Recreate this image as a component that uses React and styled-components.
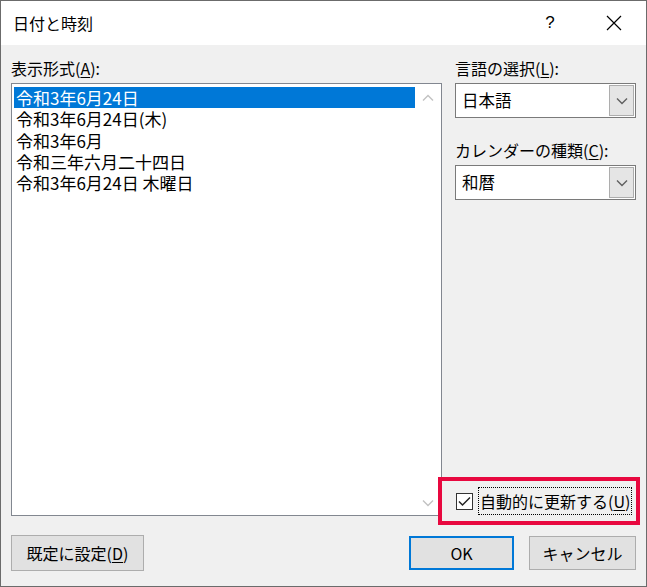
import React from "react";
import styled, { createGlobalStyle } from "styled-components";

const GlobalStyle = createGlobalStyle`
  html, body {
    margin: 0;
    padding: 0;
    background: #ffffff;
  }
  * {
    box-sizing: border-box;
  }
`;

const FONT = `"Noto Sans CJK JP", "Noto Sans", "Liberation Sans", sans-serif`;

const Window = styled.div`
  width: 647px;
  height: 587px;
  border: 1px solid #6b6b6b;
  display: flex;
  flex-direction: column;
  font-family: ${FONT};
  font-size: 16px;
  color: #000;
  background: #f0f0f0;
`;

const TitleBar = styled.div`
  height: 44px;
  background: #fff;
  display: flex;
  align-items: center;
  padding-left: 12px;
`;

const Title = styled.div`
  flex: 1;
  font-size: 16px;
`;

const TitleButton = styled.div`
  width: 64px;
  height: 44px;
  display: flex;
  align-items: center;
  justify-content: center;
  font-size: 17px;
  font-family: "Liberation Sans", sans-serif;
`;

const Body = styled.div`
  flex: 1;
  display: flex;
  flex-direction: column;
  padding: 12px 10px 15px 10px;
`;

const Main = styled.div`
  flex: 1;
  display: flex;
  gap: 13px;
`;

const LeftColumn = styled.div`
  width: 431px;
  display: flex;
  flex-direction: column;
  padding-bottom: 9px;
`;

const RightColumn = styled.div`
  flex: 1;
  display: flex;
  flex-direction: column;
`;

const Label = styled.div`
  height: 22px;
  line-height: 22px;
  margin-bottom: 4px;
  margin-top: ${(p) => p.$top || 0}px;
  white-space: nowrap;
`;

const Key = styled.span`
  text-decoration: underline;
  text-underline-offset: 2px;
`;

const ListBox = styled.div`
  flex: 1;
  display: flex;
  background: #fff;
  border: 1px solid #828790;
`;

const Items = styled.div`
  flex: 1;
  padding: 3px 0 0 2px;
`;

const Item = styled.div`
  height: 21.25px;
  line-height: 21px;
  padding-left: 2px;
  font-size: 17px;
  white-space: nowrap;
  background: ${(p) => (p.$selected ? "#0078d7" : "transparent")};
  color: ${(p) => (p.$selected ? "#fff" : "#000")};
`;

const ScrollBar = styled.div`
  width: 26px;
  display: flex;
  flex-direction: column;
  justify-content: space-between;
  align-items: center;
  padding: 10px 0 8px;
`;

const Combo = styled.div`
  height: 35px;
  display: flex;
  background: #fff;
  border: 1px solid #7a7a7a;
`;

const ComboText = styled.div`
  flex: 1;
  padding-left: 6px;
  line-height: 33px;
  font-size: 16.5px;
`;

const ComboButton = styled.div`
  width: 25px;
  margin: 1px;
  background: #e5e5e5;
  border: 1px solid #adadad;
  display: flex;
  align-items: center;
  justify-content: center;
`;

const Spacer = styled.div`
  flex: 1;
`;

const Highlight = styled.div`
  height: 48px;
  margin-left: -17px;
  margin-right: -4px;
  border: 4px solid #e8083f;
  display: flex;
  align-items: center;
  padding-left: 14px;
  gap: 5px;
`;

const CheckBox = styled.div`
  width: 17px;
  height: 17px;
  border: 1px solid #333;
  background: #fff;
  display: flex;
  align-items: center;
  justify-content: center;
`;

const FocusLabel = styled.div`
  border: 1px dotted #000;
  height: 28px;
  line-height: 26px;
  padding: 0 1px;
  white-space: nowrap;
`;

const Footer = styled.div`
  margin-top: 10px;
  display: flex;
  align-items: center;
`;

const Button = styled.div`
  width: ${(p) => p.$w}px;
  height: ${(p) => p.$h || 34}px;
  margin-left: ${(p) => p.$ml || 0}px;
  background: #e1e1e1;
  border: ${(p) => (p.$default ? "2px solid #0078d7" : "1px solid #adadad")};
  display: flex;
  align-items: center;
  justify-content: center;
  white-space: nowrap;
`;

const Chevron = ({ up, color }) => (
  <svg width="12" height="8" viewBox="0 0 12 8">
    <path
      d={up ? "M1 6.5 L6 1.5 L11 6.5" : "M1 1.5 L6 6.5 L11 1.5"}
      fill="none"
      stroke={color}
      strokeWidth="1.4"
    />
  </svg>
);

const items = [
  "令和3年6月24日",
  "令和3年6月24日(木)",
  "令和3年6月",
  "令和三年六月二十四日",
  "令和3年6月24日 木曜日",
];

export default function App() {
  return (
    <>
      <GlobalStyle />
      <Window>
        <TitleBar>
          <Title>日付と時刻</Title>
          <TitleButton>?</TitleButton>
          <TitleButton>
            <svg width="16" height="16" viewBox="0 0 16 16">
              <path d="M1 1 L15 15 M15 1 L1 15" stroke="#000" strokeWidth="1.2" />
            </svg>
          </TitleButton>
        </TitleBar>
        <Body>
          <Main>
            <LeftColumn>
              <Label>
                表示形式(<Key>A</Key>):
              </Label>
              <ListBox>
                <Items>
                  {items.map((t, i) => (
                    <Item key={t} $selected={i === 0}>
                      {t}
                    </Item>
                  ))}
                </Items>
                <ScrollBar>
                  <Chevron up color="#c2c2c2" />
                  <Chevron color="#c2c2c2" />
                </ScrollBar>
              </ListBox>
            </LeftColumn>
            <RightColumn>
              <Label>
                言語の選択(<Key>L</Key>):
              </Label>
              <Combo>
                <ComboText>日本語</ComboText>
                <ComboButton>
                  <Chevron color="#606060" />
                </ComboButton>
              </Combo>
              <Label $top={21}>
                カレンダーの種類(<Key>C</Key>):
              </Label>
              <Combo>
                <ComboText>和暦</ComboText>
                <ComboButton>
                  <Chevron color="#606060" />
                </ComboButton>
              </Combo>
              <Spacer />
              <Highlight>
                <CheckBox>
                  <svg width="13" height="11" viewBox="0 0 13 11">
                    <path d="M1 5.5 L4.5 9 L12 1.5" fill="none" stroke="#222" strokeWidth="1.5" />
                  </svg>
                </CheckBox>
                <FocusLabel>
                  自動的に更新する(<Key>U</Key>)
                </FocusLabel>
              </Highlight>
            </RightColumn>
          </Main>
          <Footer>
            <Button $w={133} $h={36}>
              既定に設定(<Key>D</Key>)
            </Button>
            <Spacer />
            <Button $w={105} $default>
              OK
            </Button>
            <Button $w={107} $ml={15}>
              キャンセル
            </Button>
          </Footer>
        </Body>
      </Window>
    </>
  );
}
